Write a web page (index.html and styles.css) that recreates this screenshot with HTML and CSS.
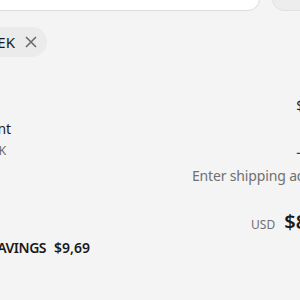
FILE: index.html
```html
<!DOCTYPE html>
<html>
<head>
<meta charset="utf-8">
<link rel="stylesheet" href="styles.css">
</head>
<body>
<div class="page">
  <div class="topbar">
    <div class="field"></div>
    <div class="apply"></div>
  </div>
  <div class="chips">
    <span class="chip"><span class="chip-label">WEEK</span><svg class="chip-x" width="12" height="12" viewBox="0 0 12 12"><path d="M1 1L11 11M11 1L1 11" stroke="#6b6b6b" stroke-width="1.6" fill="none"/></svg></span>
  </div>
  <div class="summary">
    <div class="row">
      <span class="label"></span>
      <span class="value">$98,40</span>
    </div>
    <div class="row discount">
      <div class="label-col">
        <span class="label">Discount</span>
        <span class="code"><svg width="14" height="14" viewBox="0 0 14 14"><path d="M1.5 2.5v4l6 6 5-5-6-6h-4z" stroke="#6b6b6b" stroke-width="1.2" fill="none"/></svg>WEEK</span>
      </div>
      <span class="value">−$9,69</span>
    </div>
    <div class="row ship">
      <span class="label"></span>
      <span class="muted">Enter shipping address</span>
    </div>
    <div class="row total">
      <span class="label"></span>
      <span class="total-val"><span class="cur">USD</span><span class="amount">$88,71</span></span>
    </div>
    <div class="savings"><span class="sav-label">TOTAL SAVINGS</span><span>$9,69</span></div>
  </div>
</div>
</body>
</html>
```

FILE: styles.css
```css
html, body {
  margin: 0;
  background: #f4f4f4;
  overflow: hidden;
}
body {
  font-family: "Noto Sans", "Open Sans", sans-serif;
  color: #1a1a1a;
  width: 300px;
  height: 300px;
}
.page {
  margin-left: -47px;
  width: 387px;
}
.topbar {
  display: flex;
  gap: 12px;
  height: 41px;
  margin-top: -30px;
}
.field {
  width: 305px;
  background: #fff;
  border: 1px solid #dcdcdc;
  border-radius: 12px;
}
.apply {
  flex: 1;
  background: #ededed;
  border: 1px solid #e2e2e2;
  border-radius: 12px;
}
.chips {
  display: flex;
  justify-content: flex-end;
  width: 94px;
  margin-top: 16px;
}
.chip {
  display: inline-flex;
  align-items: center;
  gap: 10px;
  height: 30px;
  padding: 0 10px 0 12px;
  background: #ebebeb;
  border-radius: 15px;
  font-size: 15px;
}
.chip-x {
  display: block;
}
.summary {
  display: flex;
  flex-direction: column;
  margin-top: 39px;
}
.row {
  display: flex;
  justify-content: space-between;
  align-items: flex-end;
  font-size: 14px;
  line-height: 20px;
}
.discount {
  margin-top: 3px;
}
.label-col {
  display: flex;
  flex-direction: column;
}
.code {
  display: flex;
  align-items: center;
  gap: 6px;
  font-size: 12.5px;
  line-height: 24px;
  color: #6b6b6b;
}
.ship {
  margin-top: 3px;
}
.muted {
  color: #707070;
  letter-spacing: -0.15px;
}
.total {
  margin-top: 22px;
  align-items: baseline;
}
.total-val {
  display: flex;
  align-items: baseline;
  gap: 9px;
  margin-right: -7px;
}
.cur {
  font-size: 12px;
  color: #707070;
}
.amount {
  font-size: 20px;
  font-weight: 600;
  line-height: 28px;
}
.savings {
  display: flex;
  gap: 8px;
  font-size: 14px;
  font-weight: 600;
  line-height: 20px;
  margin-top: 2px;
  margin-left: -6px;
}
.sav-label {
  letter-spacing: -0.5px;
}
```
